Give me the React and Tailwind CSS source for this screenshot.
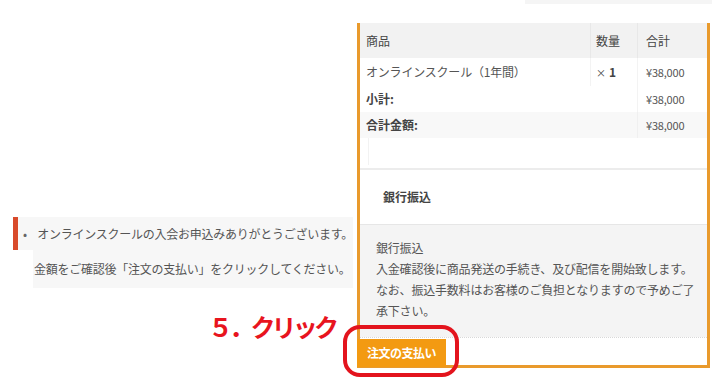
export default function App() {
  const font = { fontFamily: '"Noto Sans CJK JP", "Noto Sans", sans-serif' };
  return (
    <div className="relative w-[726px] h-[378px] overflow-hidden bg-white text-[#555]" style={font}>
      <div className="ml-[525px] w-[187px] h-[4px] bg-[#f5f5f5]" />
      <div className="flex mt-[19px]">
        {/* left column */}
        <div className="w-[357px] shrink-0 pt-[194px]">
          <div className="ml-[13px] w-[340px]">
            <div className="flex items-center h-[33px] border-l-[5px] border-[#d84a2b] bg-[#f7f7f7] text-[12px] tracking-[-0.25px] whitespace-nowrap">
              <span className="ml-[5px] w-[15px] text-[#666] text-[12px]">•</span>
              <span>オンラインスクールの入会お申込みありがとうございます。</span>
            </div>
            <div className="ml-[20px] h-[38px] flex items-center bg-[#f7f7f7] pl-[1px] text-[12px] tracking-[-0.25px] whitespace-nowrap">
              金額をご確認後「注文の支払い」をクリックしてください。
            </div>
          </div>
        </div>
        {/* right frame */}
        <div className="w-[353px] shrink-0 border-x-[3px] border-b-[3px] border-[#e99a2c] text-[12px] text-[#555]">
          <div className="flex h-[35px] bg-[#f2f2f2] text-[#444]">
            <div className="w-[230px] pl-[6px] flex items-center">商品</div>
            <div className="w-[47px] pl-[5px] flex items-center border-l border-[#e8e8e8]">数量</div>
            <div className="flex-1 pl-[8px] flex items-center border-l border-[#e8e8e8]">合計</div>
          </div>
          <div className="flex h-[28px]">
            <div className="w-[230px] pl-[6px] flex items-center tracking-[-0.2px]">オンラインスクール（1年間）</div>
            <div className="w-[47px] pl-[5px] flex items-center text-[#444] border-l border-[#f3f3f3]">
              <span className="text-[10px]">×</span>
              <span className="ml-[3px] font-bold">1</span>
            </div>
            <div className="flex-1 pl-[8px] flex items-center border-l border-[#f3f3f3] text-[11px] tracking-[-0.2px]">¥38,000</div>
          </div>
          <div className="flex h-[26px]">
            <div className="w-[277px] pl-[6px] flex items-center font-bold text-[#444]">小計:</div>
            <div className="flex-1 pl-[8px] flex items-center border-l border-[#f3f3f3] text-[11px] tracking-[-0.2px]">¥38,000</div>
          </div>
          <div className="flex h-[26px] bg-[#f8f8f8]">
            <div className="w-[277px] pl-[6px] flex items-center font-bold text-[#444]">合計金額:</div>
            <div className="flex-1 pl-[8px] flex items-center border-l border-[#f0f0f0] text-[11px] tracking-[-0.2px]">¥38,000</div>
          </div>
          <div className="h-[32px] border-b-2 border-[#ececec]">
            <div className="ml-[8px] h-[27px] border-l border-[#f2f2f2]" />
          </div>
          <div className="h-[54px] flex items-center pl-[23px] font-bold text-[#444]">銀行振込</div>
          <div className="h-[113px] border-t border-[#e6e6e6] bg-[#f4f4f4] pt-[12px] pl-[16px] pr-[10px] leading-[21px] tracking-[-0.2px] text-[#555]">
            <div>銀行振込</div>
            <div>入金確認後に商品発送の手続き、及び配信を開始致します。</div>
            <div>なお、振込手数料はお客様のご負担となりますので予めご了承下さい。</div>
          </div>
          <div className="h-[28px] border-t border-dotted border-[#d8d8d8]">
            <button className="relative z-10 -ml-[3px] mt-[1px] h-[28px] w-[89px] bg-[#f39a12] text-white text-[12px] font-bold tracking-[-0.5px]">
              注文の支払い
            </button>
          </div>
        </div>
      </div>
      {/* annotations */}
      <div className="absolute left-[343px] top-[325px] w-[116px] h-[52px] border-[4px] border-[#e3141d] rounded-[17px] z-20" />
      <div className="absolute left-[208px] top-[310px] text-[25px] leading-[33px] font-bold text-[#e8141e] tracking-[-3.8px] whitespace-nowrap">
        ５．クリック
      </div>
    </div>
  );
}
